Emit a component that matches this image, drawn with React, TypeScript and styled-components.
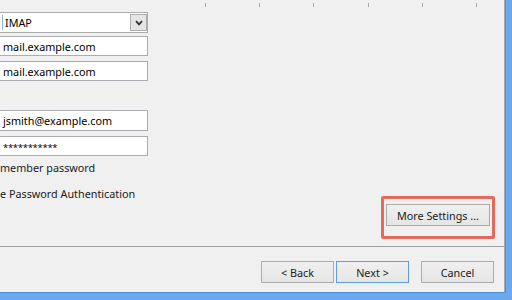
import styled, { createGlobalStyle } from "styled-components";

const GlobalStyle = createGlobalStyle`
  html, body {
    margin: 0;
    padding: 0;
    background: #6aa9ef;
    overflow: hidden;
  }
  body {
    font-family: "Noto Sans", "Open Sans", sans-serif;
    font-size: 10.8px;
    color: #1b1b1b;
  }
`;

const Frame = styled.div`
  width: 512px;
  height: 300px;
  box-sizing: border-box;
  padding: 0 7px 7px 0;
  background: #6aa9ef;
  display: flex;
`;

const Dialog = styled.div`
  flex: 1;
  display: flex;
  flex-direction: column;
  background: #f0f0f0;
  border-right: 1px solid #a9a9a9;
  border-bottom: 1px solid #4d8ed8;
  box-shadow: 1px 0 0 #4d8ed8;
  overflow: hidden;
`;

const Ticks = styled.div`
  height: 7px;
  display: flex;
  align-items: flex-end;
  gap: 53.2px;
  padding-left: 205px;
`;

const Tick = styled.span`
  width: 1px;
  height: 4px;
  background: #a8a8a8;
`;

const Main = styled.div`
  flex: 1;
  display: flex;
`;

const FormCol = styled.div`
  width: 149px;
  margin-left: -1px;
  display: flex;
  flex-direction: column;
`;

const Select = styled.div`
  margin-top: 5px;
  height: 21px;
  box-sizing: border-box;
  border: 1px solid #acacac;
  background: #fff;
  display: flex;
  align-items: center;
  padding-left: 2px;
`;

const SelectValue = styled.span`
  flex: 1;
  border-left: 1px solid #8fb3dc;
  padding-left: 2px;
  line-height: 15px;
  color: #000;
`;

const DropButton = styled.span`
  width: 17px;
  height: 17px;
  box-sizing: border-box;
  border: 1px solid #adadad;
  background: #e5e5e5;
  display: flex;
  align-items: center;
  justify-content: center;
`;

const TextBox = styled.div<{ $top: number; $h?: number }>`
  margin-top: ${(p) => p.$top}px;
  height: ${(p) => p.$h ?? 20}px;
  box-sizing: border-box;
  border: 1px solid #abadb3;
  background: #fff;
  padding-left: 3px;
  display: flex;
  align-items: center;
  color: #000;
  white-space: nowrap;
`;

const Secret = styled.span`
  font-size: 9.5px;
  letter-spacing: -0.3px;
  padding-top: 2px;
`;

const Label = styled.div<{ $top: number }>`
  margin-top: ${(p) => p.$top}px;
  margin-left: 1px;
  line-height: 16px;
  white-space: nowrap;
  color: #1b1b1b;
`;

const Side = styled.div`
  flex: 1;
  display: flex;
  justify-content: flex-end;
  align-items: flex-end;
  padding: 0 9px 7px 0;
`;

const Highlight = styled.div`
  width: 114px;
  height: 43px;
  box-sizing: border-box;
  border: 3px solid #e46a5e;
  border-radius: 2px;
  padding: 5px 2px 0;
`;

const Button = styled.button<{ $default?: boolean; $w?: number }>`
  width: ${(p) => p.$w ?? 73}px;
  height: 22px;
  box-sizing: border-box;
  border: 1px solid ${(p) => (p.$default ? "#5a9fdc" : "#acacac")};
  background: linear-gradient(#f0f0f0, #e5e5e5);
  font-family: inherit;
  font-size: 10.8px;
  color: #1b1b1b;
  padding: 0;
`;

const Separator = styled.div`
  height: 1px;
  background: #a0a0a0;
`;

const Footer = styled.div`
  height: 45px;
  display: flex;
  align-items: flex-start;
  justify-content: flex-end;
  padding: 14px 10px 0 0;
  box-sizing: border-box;
`;

const Gap = styled.span<{ $w: number }>`
  width: ${(p) => p.$w}px;
`;

export default function App() {
  return (
    <>
      <GlobalStyle />
      <Frame>
        <Dialog>
          <Ticks>
            {[0, 1, 2, 3, 4, 5].map((i) => (
              <Tick key={i} />
            ))}
          </Ticks>
          <Main>
            <FormCol>
              <Select>
                <SelectValue>IMAP</SelectValue>
                <DropButton>
                  <svg width="8" height="6" viewBox="0 0 8 6">
                    <path d="M1 1.2 L4 4.4 L7 1.2" fill="none" stroke="#333" strokeWidth="1.8" />
                  </svg>
                </DropButton>
              </Select>
              <TextBox $top={3}>mail.example.com</TextBox>
              <TextBox $top={5}>mail.example.com</TextBox>
              <TextBox $top={29} $h={21}>jsmith@example.com</TextBox>
              <TextBox $top={5}>
                <Secret>***********</Secret>
              </TextBox>
              <Label $top={4}>member password</Label>
              <Label $top={10}>e Password Authentication</Label>
            </FormCol>
            <Side>
              <Highlight>
                <Button $w={104}>More Settings ...</Button>
              </Highlight>
            </Side>
          </Main>
          <Separator />
          <Footer>
            <Button>&lt; Back</Button>
            <Gap $w={2} />
            <Button $default>Next &gt;</Button>
            <Gap $w={12} />
            <Button>Cancel</Button>
          </Footer>
        </Dialog>
      </Frame>
    </>
  );
}
